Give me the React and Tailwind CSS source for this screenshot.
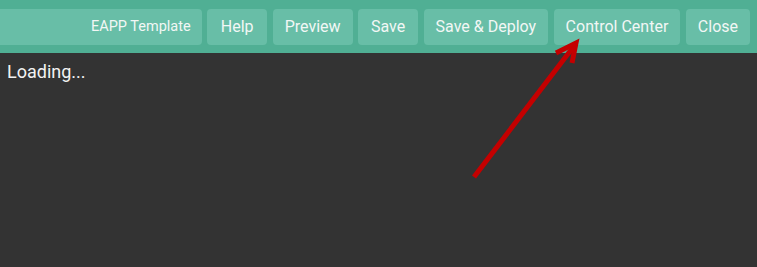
import React from 'react';

const buttons = ['Help', 'Preview', 'Save', 'Save & Deploy', 'Control Center', 'Close'];

const App = () => {
  return (
    <div className="relative h-[267px] w-full overflow-hidden bg-[#333333] font-['Roboto',sans-serif]">
      <div className="flex h-[53px] items-center gap-[5.5px] bg-[#50af94] pr-[7px]">
        <div className="-ml-1 flex h-9 flex-1 items-center justify-end rounded bg-[#68bea7] px-[11px] text-[14.5px] text-[#f2f7f5]">
          EAPP Template
        </div>
        {buttons.map((b) => (
          <button
            key={b}
            className="h-9 min-w-[60px] rounded bg-[#68bea7] px-[12px] text-[16px] text-[#f2f7f5]"
          >
            {b}
          </button>
        ))}
      </div>
      <div className="px-[7px] pt-[5px] text-[18px] text-[#f2f2f2]">Loading...</div>

      {/* annotation arrow */}
      <svg className="pointer-events-none absolute left-0 top-0" width="757" height="267">
        <g stroke="#c40000" strokeWidth="5" fill="none" strokeLinecap="butt" strokeLinejoin="miter">
          <line x1="474" y1="177" x2="574" y2="46" />
          <polyline points="556,53 576,43 572,63" />
        </g>
      </svg>
    </div>
  );
};

export default App;
